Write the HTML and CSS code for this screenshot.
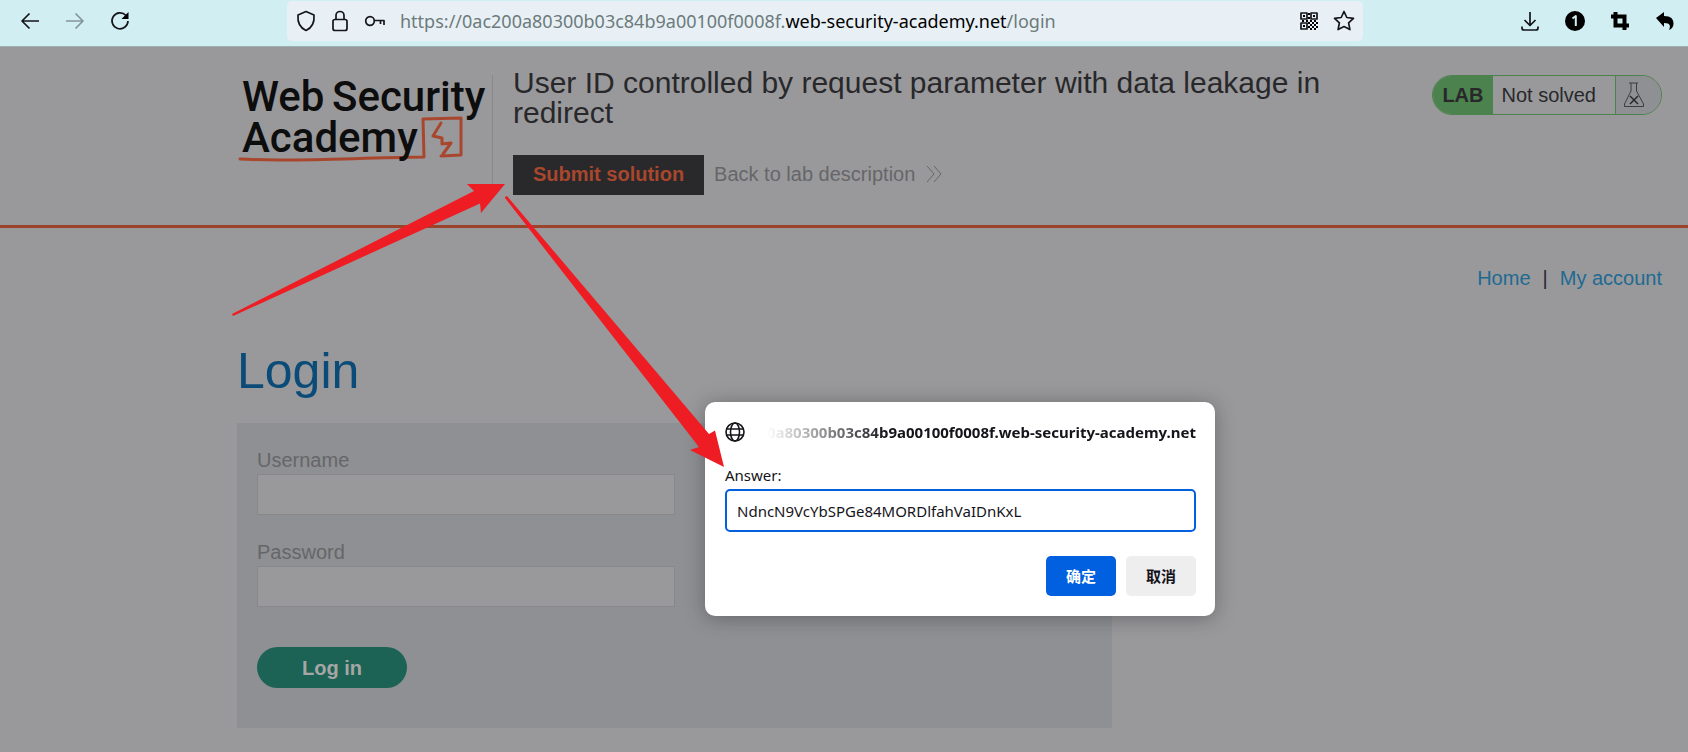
FILE: index.html
```html
<!DOCTYPE html>
<html lang="en">
<head>
<meta charset="utf-8">
<title>User ID controlled by request parameter with data leakage in redirect</title>
<link rel="stylesheet" href="styles.css">
</head>
<body>
<nav class="toolbar" aria-label="Browser">
  <div class="nav-buttons">
    <button class="tool" aria-label="Back"><svg width="20" height="20" viewBox="0 0 20 20"><path d="M19 10H2M9.500 2.500L2 10l7.500 7.500"/></svg></button>
    <button class="tool tool-off" aria-label="Forward"><svg width="20" height="20" viewBox="0 0 20 20"><path d="M1 10h17M10.500 2.500L18 10l-7.500 7.500"/></svg></button>
    <button class="tool" aria-label="Reload"><svg width="20" height="20" viewBox="0 0 20 20"><path d="M16 4.500A8 8 0 1 0 18 10"/><path class="solid" d="M18.500 1v7h-7z"/></svg></button>
  </div>
  <div class="address">
    <svg width="20" height="22" viewBox="0 0 20 22"><path d="M10 1.500L18 5c.6 7-1.500 12.500-8 15.500C3.500 17.500 1.400 12 2 5z"/></svg>
    <svg width="20" height="22" viewBox="0 0 20 22"><rect x="3" y="9.500" width="14" height="11" rx="2"/><path d="M6 9.500V5.500a4 4 0 0 1 8 0v4"/></svg>
    <svg width="22" height="22" viewBox="0 0 22 22"><circle cx="6" cy="11" r="4.300"/><path d="M10.500 10.500H20V15M16.500 10.500V14"/></svg>
    <div class="url" role="textbox" aria-label="Address">https://0ac200a80300b03c84b9a00100f0008f.<span class="domain">web-security-academy.net</span>/login</div>
    <button class="tool" aria-label="QR code"><svg width="20" height="20" viewBox="0 0 20 20"><g><rect x="2" y="2" width="6" height="6"/><rect x="12" y="2" width="6" height="6"/><rect x="2" y="12" width="6" height="6"/></g><path class="solid" d="M4 4h2v2H4zM14 4h2v2h-2zM4 14h2v2H4zM9 2h2v2H9zM9 6h2v2H9zM3 9h2v2H3zM7 9h2v2H7zM11 9h2v2h-2zM15 9h2v2h-2zM9 11h2v2H9zM13 11h2v2h-2zM17 11h2v2h-2zM11 13h2v2h-2zM15 13h2v2h-2zM9 15h2v2H9zM13 15h2v2h-2zM17 15h2v2h-2zM11 17h2v2h-2zM15 17h2v2h-2z"/></svg></button>
    <button class="tool" aria-label="Bookmark"><svg width="22" height="22" viewBox="0 0 22 22"><path d="M11 1.500l2.800 6 6.700.8-4.900 4.600 1.300 6.700L11 16.500l-5.900 3.100 1.300-6.700L1.500 8.300l6.700-.8z"/></svg></button>
  </div>
  <div class="extensions">
    <button class="tool" aria-label="Downloads"><svg width="20" height="20" viewBox="0 0 20 20"><path d="M10 1v13M4.500 9l5.500 5.500L15.500 9M2 15.500V17a2 2 0 0 0 2 2h12a2 2 0 0 0 2-2v-1.500"/></svg></button>
    <button class="tool" aria-label="Notifications"><svg width="20" height="20" viewBox="0 0 20 20"><circle class="solid" cx="10" cy="10" r="10"/><path class="digit" d="M7.500 7.500L10.800 5v10"/></svg></button>
    <button class="tool" aria-label="Crop"><svg width="20" height="20" viewBox="0 0 20 20"><path class="thick" d="M5.500 1v13.500H19M1 5.500h13.500V19"/></svg></button>
    <button class="tool" aria-label="Undo"><svg width="20" height="20" viewBox="0 0 20 20"><path class="solid" d="M1 7l8-6v4c7 0 9.500 3 9.500 7.500 0 3-1.500 5.500-4.500 6.500 1.500-3.500 2-7-5-7v4z"/></svg></button>
  </div>
</nav>

<header class="lab-header">
  <div class="logo">
    <svg width="255" height="90" viewBox="0 0 255 90" role="img" aria-label="Web Security Academy">
      <g class="sketch"><path d="M3 84c50 3 110-1 184-2l-1-38 38-1v37l-20 1"/><path d="M204 48l-8 13 9 2v6l9-1-8 11"/></g>
      <g class="wordmark"><text x="5" y="36">Web</text><text x="95" y="36">Security</text><text x="5" y="77">Academy</text></g>
    </svg>
  </div>
  <div class="lab-title">
    <h2>User ID controlled by request parameter with data leakage in redirect</h2>
    <div class="lab-actions">
      <button class="submit">Submit solution</button>
      <a class="back" href="#">Back to lab description <svg width="16" height="18" viewBox="0 0 16 18"><path d="M1 1l7 8-7 8M8 1l7 8-7 8"/></svg></a>
    </div>
  </div>
  <div class="status">
    <strong>LAB</strong>
    <span class="state">Not solved</span>
    <span class="flask"><svg width="22" height="26" viewBox="0 0 22 26"><path d="M6 1h9M8 1v8L1.500 22v2.500h19V22L13.500 9V1"/><path class="cross" d="M7 14l8 8M15 14l-8 8"/></svg></span>
  </div>
</header>

<main class="page">
  <nav class="links"><a href="#">Home</a><span>|</span><a href="#">My account</a></nav>
  <h1>Login</h1>
  <form class="login">
    <label for="user">Username</label>
    <input id="user" type="text">
    <label for="pass">Password</label>
    <input id="pass" type="password">
    <button type="button">Log in</button>
  </form>
</main>

<section class="dialog" role="dialog" aria-labelledby="origin">
  <div class="origin">
    <svg width="20" height="20" viewBox="0 0 20 20"><circle cx="10" cy="10" r="9"/><ellipse cx="10" cy="10" rx="4.500" ry="9"/><path d="M1.500 7h17M1.500 13h17"/></svg>
    <span id="origin">0a80300b03c84b9a00100f0008f.web-security-academy.net</span>
  </div>
  <label for="answer">Answer:</label>
  <input id="answer" type="text" value="NdncN9VcYbSPGe84MORDlfahVaIDnKxL">
  <div class="choices">
    <button class="ok">确定</button>
    <button>取消</button>
  </div>
</section>

<svg class="arrows" width="500" height="300" viewBox="230 180 500 300" aria-hidden="true">
  <path d="M232 314l242-123-7-7h38l-24 29-1-9.500L233 316z"/>
  <path d="M505 197l2-1 202 238 6-3.500 9 36.500-34-17 9-3L505 198z"/>
</svg>
</body>
</html>
```
FILE: styles.css
```css
* { box-sizing: border-box; }
body {
  margin: 0;
  position: relative;
  min-height: 100vh;
  background: #99999b;
  color: #28282b;
  font: 20px/24px "Liberation Sans", Arial, sans-serif;
}
button, input { font: inherit; }
svg { display: block; flex: none; }
a { text-decoration: none; }

.toolbar {
  display: flex;
  align-items: flex-start;
  height: 47px;
  padding-top: 1px;
  background: #d1eef2;
  border-bottom: 1px solid #9fb0b3;
}
.toolbar svg { fill: none; stroke: #15141a; stroke-width: 1.7; stroke-linejoin: round; }
.tool { padding: 0; border: 0; background: none; }
.tool-off { opacity: 0.4; }
.toolbar .solid { fill: #000; stroke: none; }
.toolbar .digit { stroke: #d1eef2; stroke-width: 2; }
.toolbar .thick { stroke: #000; stroke-width: 4; stroke-linejoin: miter; }
.nav-buttons, .extensions { display: flex; align-items: center; height: 40px; gap: 25px; }
.nav-buttons { width: 287px; padding-left: 20px; }
.extensions { width: 325px; padding-right: 13px; justify-content: flex-end; }
.address {
  flex: 1;
  display: flex;
  align-items: center;
  gap: 14px;
  height: 40px;
  padding: 0 8px 0 9px;
  border-radius: 5px;
  background: #e8f0f6;
}
.url { flex: 1; font: 18px/24px "Noto Sans", "Open Sans", sans-serif; color: #6c7b7b; white-space: nowrap; }
.domain { color: #000; }

.lab-header {
  display: flex;
  align-items: flex-start;
  min-height: 181px;
  padding: 21px 26px 0 237px;
  border-bottom: 3px solid #9c432c;
}
.logo { width: 256px; height: 110px; margin-top: 7px; border-right: 1px solid #88888a; }
.sketch { fill: none; stroke: #a8472d; stroke-width: 3; stroke-linejoin: round; stroke-linecap: round; }
.wordmark { font: 500 42px Roboto, sans-serif; fill: #0d0d0e; }
.lab-title { flex: 1; padding-left: 20px; }
.lab-title h2 { max-width: 830px; margin: 0; font-size: 30px; line-height: 30px; font-weight: 400; }
.lab-actions { display: flex; align-items: center; gap: 10px; margin-top: 27px; }
.submit { height: 40px; padding: 0 20px 2px; border: 0; background: #29292b; color: #a8472d; font-weight: 700; }
.back { display: flex; align-items: center; gap: 11px; padding-bottom: 2px; color: #666669; }
.back svg { fill: none; stroke: #666669; }
.status {
  display: flex;
  align-items: stretch;
  height: 40px;
  margin-top: 7px;
  line-height: 38px;
  border: 1px solid #4b824d;
  border-radius: 20px;
  overflow: hidden;
}
.status strong { padding: 0 9px; background: #4b824d; }
.state { padding: 0 19px 0 9px; }
.flask { display: flex; align-items: center; width: 46px; padding-left: 7px; border-left: 1px solid #4b824d; background: #8e9093; }
.flask svg { fill: none; stroke: #3c3c40; }
.flask .cross { stroke: #28282b; stroke-width: 1.5; }

.page { padding: 38px 26px 24px 237px; }
.links { display: flex; justify-content: flex-end; }
.links span { padding: 0 12px; }
.links a { color: #206a92; }
.page h1 { margin: 51px 0 22px; font-size: 50px; line-height: 60px; font-weight: 400; color: #0b4b78; }
.login {
  display: flex;
  flex-direction: column;
  align-items: flex-start;
  max-width: 875px;
  padding: 24px 20px 40px;
  background: #8e9093;
}
.login label { color: #666669; line-height: 27px; }
.login input {
  width: 50%;
  height: 41px;
  margin-bottom: 24px;
  padding: 0 10px;
  border: 1px solid #88888a;
  background: #99999b;
}
.login button {
  width: 150px;
  height: 41px;
  margin-top: 16px;
  border: 0;
  border-radius: 21px;
  background: #1c6355;
  color: #a6a6a6;
  font-weight: 700;
}

.dialog {
  position: absolute;
  left: 705px;
  top: 402px;
  width: 510px;
  padding: 20px 19px 20px 20px;
  border-radius: 10px;
  background: #fff;
  box-shadow: 0 2px 20px rgba(20, 20, 30, 0.35);
  color: #15141a;
  font: 15px/20px "Noto Sans", "Noto Sans CJK SC", sans-serif;
}
.origin { display: flex; align-items: center; justify-content: space-between; margin-bottom: 23px; }
.origin svg { fill: none; stroke: #15141a; stroke-width: 1.6; }
.origin span {
  font-weight: 700;
  white-space: nowrap;
  -webkit-mask-image: linear-gradient(to right, transparent, #000 28%);
  mask-image: linear-gradient(to right, transparent, #000 28%);
}
.dialog label { display: block; }
.dialog input {
  display: block;
  width: 100%;
  height: 43px;
  margin: 4px 0 24px;
  padding: 0 10px;
  border: 2px solid #0060df;
  border-radius: 5px;
  background: #fff;
  color: #15141a;
}
.choices { display: flex; justify-content: flex-end; gap: 10px; }
.choices button {
  width: 70px;
  height: 40px;
  padding: 0;
  border: 0;
  border-radius: 5px;
  background: #eee;
  color: #15141a;
  font-weight: 700;
}
.choices .ok { background: #0060df; color: #fff; }

.arrows { position: absolute; left: 230px; top: 180px; fill: #ee1d24; pointer-events: none; }
```
